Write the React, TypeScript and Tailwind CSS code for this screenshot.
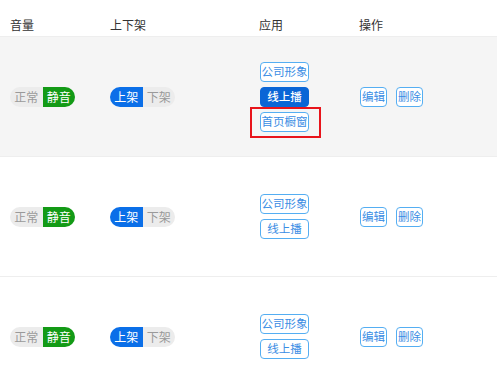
import React from "react";

function Pill({
  left,
  right,
  active,
  color,
}: {
  left: string;
  right: string;
  active: "left" | "right";
  color: string;
}) {
  const on = `${color} text-white`;
  const off = "bg-[#ececec] text-[#9a9a9a]";
  return (
    <div className="flex h-5 w-[65px] text-[12px] leading-5">
      <span
        className={`flex-1 rounded-l-full text-center ${active === "left" ? on : off}`}
      >
        {left}
      </span>
      <span
        className={`flex-1 rounded-r-full text-center ${active === "right" ? on : off}`}
      >
        {right}
      </span>
    </div>
  );
}

function Btn({
  children,
  w,
  solid,
  marked,
}: {
  children: React.ReactNode;
  w: string;
  solid?: boolean;
  marked?: boolean;
}) {
  return (
    <div
      className={`relative flex h-5 items-center justify-center whitespace-nowrap rounded-[4px] border text-[11.5px] ${w} ${
        solid
          ? "border-[#0a66d6] bg-[#0a66d6] font-medium text-white"
          : "border-[#55aef2] bg-white text-[#3a8de4]"
      }`}
    >
      {children}
      {marked && (
        <div className="pointer-events-none absolute -left-[11px] -right-[13px] -top-[6px] -bottom-[7px] border-2 border-[#e8141b]" />
      )}
    </div>
  );
}

const rows = [
  { bg: "bg-[#f5f5f5]", apps: ["公司形象", "线上播", "首页橱窗"] },
  { bg: "bg-white", apps: ["公司形象", "线上播"] },
  { bg: "bg-white", apps: ["公司形象", "线上播"] },
];

export default function App() {
  return (
    <div
      className="h-[389px] w-[497px] overflow-hidden bg-white text-[12px] text-[#333]"
      style={{ fontFamily: '"Noto Sans CJK SC", "Noto Sans", sans-serif' }}
    >
      <div className="flex h-[37px] border-b border-[#eeeeee] pt-[16px] leading-[18px]">
        <div className="w-[100px] pl-[10px]">音量</div>
        <div className="w-[149px] pl-[10px]">上下架</div>
        <div className="w-[100px] pl-[10px]">应用</div>
        <div className="pl-[10px]">操作</div>
      </div>
      {rows.map((r, i) => (
        <div
          key={i}
          className={`flex h-[120px] shrink-0 items-center border-b border-[#eeeeee] ${r.bg}`}
        >
          <div className="w-[100px] pl-[10px]">
            <Pill left="正常" right="静音" active="right" color="bg-[#139a16]" />
          </div>
          <div className="w-[150px] pl-[10px]">
            <Pill left="上架" right="下架" active="left" color="bg-[#0b6fe8]" />
          </div>
          <div className="flex w-[100px] flex-col gap-[5px] pl-[10px]">
            {r.apps.map((a, j) => (
              <Btn
                key={a}
                w="w-[49px]"
                solid={i === 0 && j === 1}
                marked={i === 0 && j === 2}
              >
                {a}
              </Btn>
            ))}
          </div>
          <div className="flex gap-[9px] pl-[10px]">
            <Btn w="w-[27px]">编辑</Btn>
            <Btn w="w-[27px]">删除</Btn>
          </div>
        </div>
      ))}
    </div>
  );
}
